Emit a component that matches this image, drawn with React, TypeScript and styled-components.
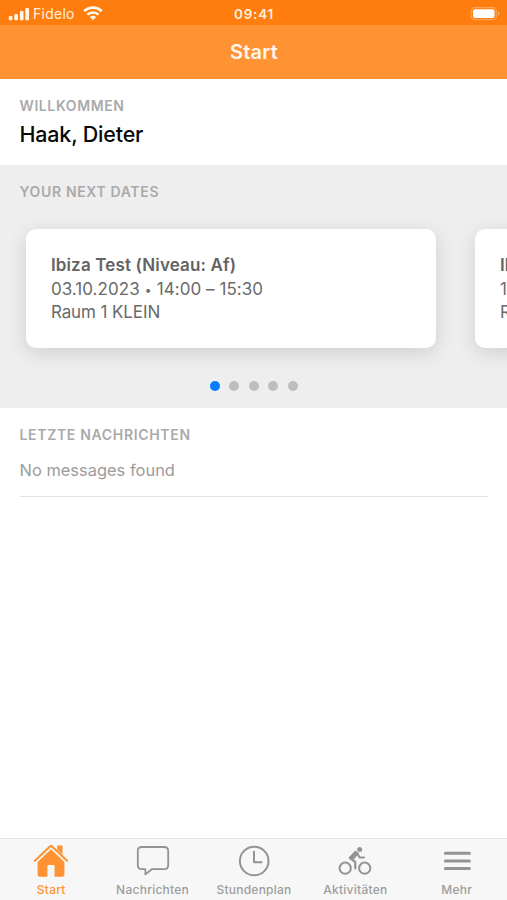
import React from "react";
import styled, { createGlobalStyle } from "styled-components";

const GlobalStyle = createGlobalStyle`
  * { box-sizing: border-box; }
  body { margin: 0; background: #fff; font-family: Inter, "Liberation Sans", sans-serif; }
`;

const Screen = styled.div`
  width: 100%;
  height: 100vh;
  display: flex;
  flex-direction: column;
  overflow: hidden;
  background: #fff;
`;

const StatusBar = styled.div`
  height: 25px;
  flex: none;
  display: grid;
  grid-template-columns: 1fr auto 1fr;
  align-items: center;
  padding: 2px 7px 0 8px;
  background: #ff7d0f;
  color: #fff0dc;
`;

const Carrier = styled.div`
  display: flex;
  align-items: center;
  font-size: 14px;
  line-height: 18px;
  letter-spacing: 0.25px;
`;

const CarrierName = styled.span`
  margin: 0 8px 0 4px;
`;

const Clock = styled.div`
  font-size: 13.5px;
  font-weight: 600;
  line-height: 18px;
  letter-spacing: 0.75px;
`;

const BatterySlot = styled.div`
  display: flex;
  justify-content: flex-end;
`;

const NavBar = styled.header`
  height: 54px;
  flex: none;
  display: flex;
  align-items: center;
  justify-content: center;
  padding-left: 1px;
  background: #ff9233;
  color: #fff8ee;
  font-size: 20px;
  font-weight: 600;
  letter-spacing: 0.2px;
`;

const Welcome = styled.section`
  height: 86px;
  flex: none;
  padding: 18px 19.5px 0;
`;

const SectionLabel = styled.h2<{ $spacing: number }>`
  margin: 0;
  color: #aaa;
  font-size: 14px;
  font-weight: 600;
  line-height: 18px;
  letter-spacing: ${(p) => p.$spacing}px;
`;

const UserName = styled.div`
  margin-top: 5px;
  color: #080808;
  font-size: 21.5px;
  font-weight: 500;
  line-height: 28px;
  letter-spacing: -0.2px;
`;

const Dates = styled.section`
  height: 243px;
  flex: none;
  display: flex;
  flex-direction: column;
  padding-top: 18px;
  background: #eee;
  overflow: hidden;

  ${SectionLabel} { margin-left: 19.5px; }
`;

const Track = styled.div`
  display: flex;
  gap: 39px;
  margin-top: 28px;
  padding-left: 26.4px;
`;

const Card = styled.article`
  width: 410px;
  height: 119px;
  flex: none;
  padding: 25px 25px 0 24.5px;
  border-radius: 10px;
  background: #fff;
  box-shadow: 0 5px 20px rgba(0, 0, 0, 0.13);
  color: #6a6a6a;
  font-size: 17px;
  line-height: 23.5px;
  white-space: nowrap;
`;

const CardTitle = styled.div`
  color: #636363;
  font-weight: 600;
  letter-spacing: 0.15px;
`;

const CardTime = styled.div`
  display: flex;
  align-items: center;
  letter-spacing: 0.05px;
`;

const Bullet = styled.span`
  width: 17px;
  font-size: 12px;
  text-align: center;
`;

const CardRoom = styled.div`
  letter-spacing: -0.1px;
`;

const Pager = styled.div`
  display: flex;
  justify-content: center;
  gap: 9.5px;
  margin-top: 33px;
`;

const Dot = styled.span<{ $active?: boolean }>`
  width: 10px;
  height: 10px;
  border-radius: 50%;
  background: ${(p) => (p.$active ? "#067bff" : "#bebebe")};
`;

const Messages = styled.section`
  flex: 1;
  padding: 18px 19px 0 19.5px;
`;

const EmptyMessage = styled.p`
  height: 53px;
  margin: 0;
  padding-top: 14px;
  border-bottom: 1px solid #e2e2e2;
  color: #9b9b9b;
  font-size: 16.4px;
  line-height: 24px;
  letter-spacing: 0.03px;
`;

const TabBar = styled.nav`
  height: 62px;
  flex: none;
  display: grid;
  grid-template-columns: repeat(5, 1fr);
  border-top: 1px solid #e3e3e3;
  background: #f7f7f7;
`;

const Tab = styled.a<{ $active?: boolean }>`
  display: flex;
  flex-direction: column;
  align-items: center;
  padding: 3px 0 0 1px;
  color: ${(p) => (p.$active ? "#ff9233" : "#939393")};
  font-size: 12px;
  font-weight: 500;
  line-height: 14px;
  letter-spacing: 0.25px;

  svg { flex: none; margin-bottom: 3px; }
  span { color: ${(p) => (p.$active ? "#ff9233" : "#9d9d9d")}; }
`;

const Signal = () => (
  <svg width="21" height="14" viewBox="0 0 21 14" fill="#fff8ea">
    <rect x="0.8" y="9" width="3.6" height="4.2" rx="1" />
    <rect x="6.3" y="7" width="3.6" height="6.2" rx="1" />
    <rect x="11.9" y="4" width="3.6" height="9.2" rx="1" />
    <rect x="17.3" y="1" width="3.7" height="12.2" rx="1" />
  </svg>
);

const Wifi = () => (
  <svg width="20" height="15" viewBox="0 0 20 15" fill="none" stroke="#fff8ea">
    <path d="M1.2 5.2C6.2.5 13.8.5 18.8 5.2" strokeWidth="2.7" />
    <path d="M4.4 8.6c3.2-2.9 8-2.9 11.2 0" strokeWidth="2.6" />
    <path d="M10 9.8c-1.2 0-2.3.5-3.1 1.3L10 14.3l3.1-3.2c-.8-.8-1.9-1.3-3.1-1.3Z" fill="#fff8ea" stroke="none" />
  </svg>
);

const Battery = () => (
  <svg width="30" height="14" viewBox="0 0 30 14">
    <rect x="1.2" y=".6" width="25.2" height="12" rx="3.8" fill="none" stroke="#ffa556" strokeWidth="1.2" />
    <rect x="3" y="2.3" width="21.6" height="8.6" rx="2.2" fill="#fff" />
    <path d="M28 4.6c1.8.8 1.8 3.2 0 4Z" fill="#ffb16a" />
  </svg>
);

const HomeIcon = () => (
  <svg width="38" height="38" viewBox="0 0 38 38" fill="currentColor">
    <path d="M2.9 18.7 18.2 4.2q.8-.7 1.6 0l15.3 14.5" fill="none" stroke="currentColor" strokeWidth="2.1" strokeLinecap="round" />
    <path d="M25.2 3.6h4.7q.6 0 .6.6v8.2l-5.3-5Z" />
    <path d="M19 7.3 32.4 20v12.8q0 2-2 2h-7.8V24q0-1-1-1h-5.2q-1 0-1 1v10.8H7.6q-2 0-2-2V20Z" />
  </svg>
);

const MessageIcon = () => (
  <svg width="38" height="38" viewBox="0 0 38 38" fill="none" stroke="currentColor" strokeWidth="1.8" strokeLinejoin="round">
    <path d="M7.8 5h22.4q4 0 4 4v14.2q0 4-4 4H17.8l-6.4 5.2v-5.2H7.8q-4 0-4-4V9q0-4 4-4Z" />
  </svg>
);

const ClockIcon = () => (
  <svg width="38" height="38" viewBox="0 0 38 38" fill="none" stroke="currentColor" strokeLinecap="round" strokeLinejoin="round">
    <circle cx="19.2" cy="19" r="14.3" strokeWidth="2" />
    <path d="M19 9.8v10.4h7.6" strokeWidth="2" />
  </svg>
);

const BikeIcon = () => (
  <svg width="38" height="38" viewBox="0 0 38 38" fill="none" stroke="currentColor" strokeLinecap="round" strokeLinejoin="round">
    <circle cx="9.2" cy="26.2" r="5.6" strokeWidth="2" />
    <circle cx="28.7" cy="26.2" r="5.6" strokeWidth="2" />
    <circle cx="23.7" cy="7.6" r="2.5" fill="currentColor" stroke="none" />
    <path d="m13.9 16 5.4 4v6.4" strokeWidth="2.2" />
    <path d="m19.3 9.9 2.2 1.4-4 5.2-3.6-.8Z" fill="currentColor" strokeWidth="2" />
    <path d="m21.3 11.2 2.2 4.2h4.5" strokeWidth="2" />
  </svg>
);

const MenuIcon = () => (
  <svg width="38" height="38" viewBox="0 0 38 38" fill="none" stroke="currentColor" strokeWidth="3" strokeLinecap="round">
    <path d="M7.4 11.3h24M7.4 19h24M7.4 26.5h24" />
  </svg>
);

const tabs = [
  { label: "Start", icon: <HomeIcon /> },
  { label: "Nachrichten", icon: <MessageIcon /> },
  { label: "Stundenplan", icon: <ClockIcon /> },
  { label: "Aktivitäten", icon: <BikeIcon /> },
  { label: "Mehr", icon: <MenuIcon /> },
];

const appointments = [
  { title: "Ibiza Test (Niveau: Af)", date: "03.10.2023", time: "14:00 – 15:30", room: "Raum 1 KLEIN" },
  { title: "Ibiza Test (Niveau: Af)", date: "10.10.2023", time: "14:00 – 15:30", room: "Raum 1 KLEIN" },
];

export default function App() {
  return (
    <Screen>
      <GlobalStyle />
      <StatusBar>
        <Carrier>
          <Signal />
          <CarrierName>Fidelo</CarrierName>
          <Wifi />
        </Carrier>
        <Clock>09:41</Clock>
        <BatterySlot>
          <Battery />
        </BatterySlot>
      </StatusBar>
      <NavBar>Start</NavBar>
      <Welcome>
        <SectionLabel $spacing={0.6}>WILLKOMMEN</SectionLabel>
        <UserName>Haak, Dieter</UserName>
      </Welcome>
      <Dates>
        <SectionLabel $spacing={0.65}>YOUR NEXT DATES</SectionLabel>
        <Track>
          {appointments.map((item) => (
            <Card key={item.date}>
              <CardTitle>{item.title}</CardTitle>
              <CardTime>
                <span>{item.date}</span>
                <Bullet>•</Bullet>
                <span>{item.time}</span>
              </CardTime>
              <CardRoom>{item.room}</CardRoom>
            </Card>
          ))}
        </Track>
        <Pager>
          {[0, 1, 2, 3, 4].map((page) => (
            <Dot key={page} $active={page === 0} />
          ))}
        </Pager>
      </Dates>
      <Messages>
        <SectionLabel $spacing={0.67}>LETZTE NACHRICHTEN</SectionLabel>
        <EmptyMessage>No messages found</EmptyMessage>
      </Messages>
      <TabBar>
        {tabs.map((tab, index) => (
          <Tab key={tab.label} $active={index === 0}>
            {tab.icon}
            <span>{tab.label}</span>
          </Tab>
        ))}
      </TabBar>
    </Screen>
  );
}
